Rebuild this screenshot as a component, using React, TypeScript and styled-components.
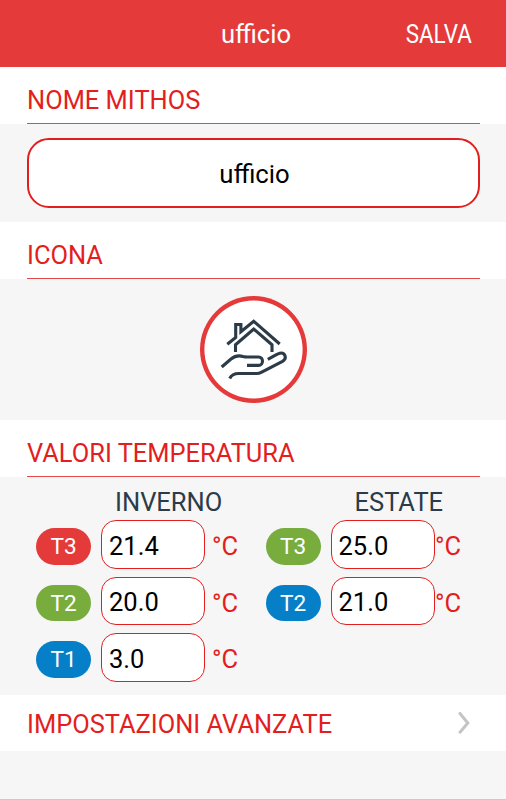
import React from "react";
import styled, { createGlobalStyle } from "styled-components";

const RED = "#e43b3a";
const INK_RED = "#e31e1e";

const GlobalStyle = createGlobalStyle`
  * { box-sizing: border-box; }
  html, body { margin: 0; padding: 0; }
  body { font-family: Roboto, "Liberation Sans", sans-serif; font-size: 25.4px; }
`;

const Screen = styled.main`
  width: 506px;
  height: 800px;
  display: flex;
  flex-direction: column;
  background: #f6f6f6;
  border-bottom: 1px solid #cbcbcb;
  overflow: hidden;
`;

const TopBar = styled.header`
  height: 67px;
  flex: none;
  display: grid;
  grid-template-columns: 1fr auto 1fr;
  align-items: center;
  padding: 2px 34px 0 40px;
  background: ${RED};
  color: #fff;
`;

const Title = styled.h1`
  grid-column: 2;
  margin: 0;
  padding-bottom: 2px;
  font-size: 25.6px;
  line-height: 30px;
  font-weight: 400;
`;

const SaveButton = styled.button`
  justify-self: end;
  padding: 0 0 2px;
  border: 0;
  background: none;
  color: #fff;
  font: 400 26px/30px Roboto, "Liberation Sans", sans-serif;
  transform: scaleX(0.86);
  transform-origin: right center;
`;

const SectionHead = styled.div`
  height: 57px;
  flex: none;
  padding: 0 26px 0 27px;
  background: #fff;
`;

const SectionTitle = styled.h2`
  height: 100%;
  margin: 0;
  padding-top: 18px;
  border-bottom: 1px solid #e4494a;
  color: ${INK_RED};
  font-size: 25.45px;
  line-height: 30px;
  font-weight: 400;
`;

const Panel = styled.section<{ $height: number }>`
  height: ${(p) => p.$height}px;
  flex: none;
  display: flex;
  justify-content: center;
`;

const NameInput = styled.input`
  width: 453px;
  height: 70px;
  margin-top: 14px;
  padding: 2px 0 0 3px;
  border: 2px solid ${INK_RED};
  border-radius: 22px;
  background: #fff;
  color: #000;
  font: 400 25.7px Roboto, "Liberation Sans", sans-serif;
  text-align: center;
  outline: none;
`;

const IconButton = styled.button`
  width: 107px;
  height: 107px;
  margin-top: 16.5px;
  padding: 0;
  border: 0;
  border-radius: 50%;
  background: #fff;
  box-shadow: inset 0 0 0 4.4px ${RED};
  display: flex;
  align-items: center;
  justify-content: center;
`;

const Season = styled.div<{ $width: number }>`
  width: ${(p) => p.$width}px;
  display: flex;
  flex-direction: column;
`;

const SeasonName = styled.h3<{ $indent: number }>`
  height: 43px;
  margin: 0;
  padding: 10px 0 0 ${(p) => p.$indent}px;
  color: #2b3b48;
  font-size: 25.5px;
  line-height: 30px;
  font-weight: 400;
`;

const Reading = styled.div`
  height: 56.5px;
  display: flex;
  align-items: flex-start;
`;

const Badge = styled.span<{ $color: string }>`
  width: 55px;
  height: 36.5px;
  margin: 8px 10px 0 0;
  border-radius: 19px;
  background: ${(p) => p.$color};
  color: #fff;
  display: flex;
  align-items: center;
  justify-content: center;
  padding-top: 1px;
  font-size: 22.6px;
`;

const ValueInput = styled.input`
  width: 104px;
  height: 48.5px;
  padding: 3.4px 0 0 7px;
  border: 1px solid ${INK_RED};
  border-radius: 15px;
  background: #fff;
  color: #000;
  font: 400 25.5px Roboto, "Liberation Sans", sans-serif;
  outline: none;
`;

const Unit = styled.span<{ $gap: number }>`
  padding: 11px 0 0 ${(p) => p.$gap}px;
  color: ${INK_RED};
  font-size: 25.5px;
  line-height: 30px;
`;

const Seasons = styled(Panel)`
  justify-content: flex-start;
  padding-left: 36px;
`;

const AdvancedRow = styled.button`
  height: 56px;
  flex: none;
  display: flex;
  align-items: center;
  justify-content: space-between;
  padding: 1px 36px 0 27px;
  border: 0;
  background: #fff;
  color: ${INK_RED};
  font: 400 25.45px/30px Roboto, "Liberation Sans", sans-serif;
`;

const ChevronIcon = styled.svg`
  margin-bottom: 1px;
`;

const HouseIcon = styled.svg`
  flex: none;
`;

const HouseInHand = () => (
  <HouseIcon width="68" height="64" viewBox="0 0 68 64" fill="none" stroke="#2b3b48" strokeWidth="3.1">
    <path d="M8.300 27.300 16.700 20.500V7.500h5.200v7.300L34.700 4.300l26 22.700" />
    <path d="M16.500 35v-7.200L34.700 12 53 27.800V35" />
    <path d="M2.700 50 12 42Q17.500 37.500 24 39.500q2 .5 4 .5h11.500c5.300 0 5.300 8.400 0 8.400H28" />
    <path d="M10.700 61.500c2-4 5-5 9-5h18c2 0 3.500-.6 5-1.400L63.500 44.300c5-3 2.500-9.300-2.700-8.100-1.800.4-3.300 1.200-4.800 2.200L48.800 42.300" />
  </HouseIcon>
);

const Chevron = () => (
  <ChevronIcon width="12" height="22" viewBox="0 0 12 22" fill="none" stroke="#c4c4c4" strokeWidth="3">
    <path d="M2 1.500 9.800 11 2 20.200" strokeLinecap="round" />
  </ChevronIcon>
);

const GREEN = "#78ad3e";
const BLUE = "#0580c8";

type ReadingData = { label: string; color: string; value: string };

const winter: ReadingData[] = [
  { label: "T3", color: RED, value: "21.4" },
  { label: "T2", color: GREEN, value: "20.0" },
  { label: "T1", color: BLUE, value: "3.0" },
];

const summer: ReadingData[] = [
  { label: "T3", color: GREEN, value: "25.0" },
  { label: "T2", color: BLUE, value: "21.0" },
];

type SeasonProps = { name: string; indent: number; width: number; unitGap: number; readings: ReadingData[] };

const SeasonColumn = ({ name, indent, width, unitGap, readings }: SeasonProps) => (
  <Season $width={width}>
    <SeasonName $indent={indent}>{name}</SeasonName>
    {readings.map((r) => (
      <Reading key={r.label}>
        <Badge $color={r.color}>{r.label}</Badge>
        <ValueInput defaultValue={r.value} aria-label={`${name} ${r.label}`} />
        <Unit $gap={unitGap}>°C</Unit>
      </Reading>
    ))}
  </Season>
);

export default function App() {
  return (
    <>
      <GlobalStyle />
      <Screen>
        <TopBar>
          <Title>ufficio</Title>
          <SaveButton>SALVA</SaveButton>
        </TopBar>
        <SectionHead>
          <SectionTitle>NOME MITHOS</SectionTitle>
        </SectionHead>
        <Panel $height={98}>
          <NameInput defaultValue="ufficio" aria-label="Nome" />
        </Panel>
        <SectionHead>
          <SectionTitle>ICONA</SectionTitle>
        </SectionHead>
        <Panel $height={141}>
          <IconButton aria-label="Icona">
            <HouseInHand />
          </IconButton>
        </Panel>
        <SectionHead>
          <SectionTitle>VALORI TEMPERATURA</SectionTitle>
        </SectionHead>
        <Seasons $height={218}>
          <SeasonColumn name="INVERNO" indent={79} width={229.5} unitGap={7} readings={winter} />
          <SeasonColumn name="ESTATE" indent={89} width={200} unitGap={0.5} readings={summer} />
        </Seasons>
        <AdvancedRow>
          IMPOSTAZIONI AVANZATE
          <Chevron />
        </AdvancedRow>
      </Screen>
    </>
  );
}
